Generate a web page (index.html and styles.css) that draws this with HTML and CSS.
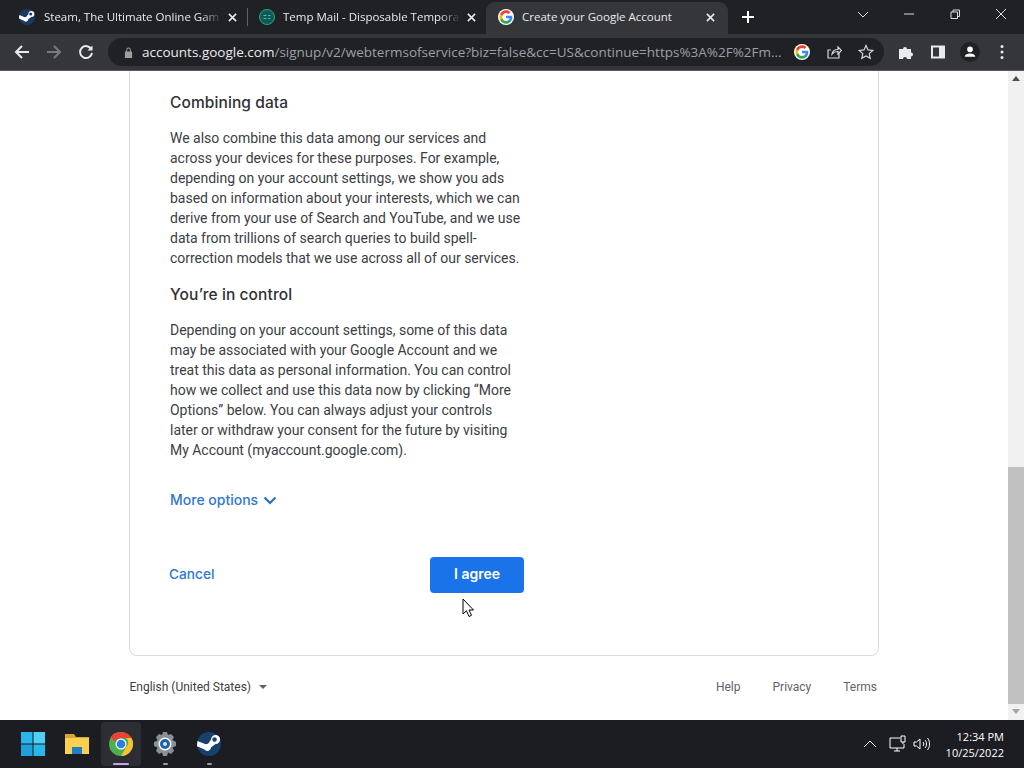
FILE: index.html
```html
<!DOCTYPE html>
<html lang="en">
<head>
<meta charset="utf-8">
<title>Create your Google Account</title>
<link rel="stylesheet" href="styles.css">
</head>
<body>
<div class="app">
  <header class="tabstrip">
    <div class="tab tab-first">
      <svg class="favicon favicon-wide" viewBox="0 0 16 16"><circle cx="8" cy="8" r="8" fill="#1b3a63"/><path d="M0 9.500l5 2.200a2.500 2.500 0 0 0 4.400-1.600l3-2.100a3 3 0 1 0-3-3L7.400 7.800A2.500 2.500 0 0 0 5.800 8.200L.3 6z" fill="#fff"/><circle cx="11.700" cy="5" r="1.500" fill="#1b3a63"/></svg>
      <span class="tab-title tab-fade">Steam, The Ultimate Online Gam</span>
      <svg class="tab-close" viewBox="0 0 10 10"><path d="M1 1l8 8M9 1l-8 8"/></svg>
    </div>
    <div class="tab-sep"></div>
    <div class="tab tab-second">
      <svg class="favicon" viewBox="0 0 16 16"><circle cx="8" cy="8" r="7.500" fill="#0f5a52" stroke="#2aa58f" stroke-width="1"/><path d="M4.500 6.500h3M4.500 9.500h3M9 6.500h2.500M9 9.500h2.500" stroke="#3fc0aa" stroke-width="1.200"/></svg>
      <span class="tab-title tab-fade">Temp Mail - Disposable Tempora</span>
      <svg class="tab-close" viewBox="0 0 10 10"><path d="M1 1l8 8M9 1l-8 8"/></svg>
    </div>
    <div class="tab tab-active">
      <svg class="favicon" viewBox="0 0 48 48"><circle cx="24" cy="24" r="24" fill="#fff"/><path fill="#4285f4" d="M43 24.500c0-1.400-.1-2.700-.4-4H24v7.600h10.800c-.5 2.400-1.900 4.500-4 5.900v5h6.400c3.700-3.500 5.800-8.600 5.800-14.500z"/><path fill="#34a853" d="M24 44c5.400 0 9.900-1.800 13.200-4.900l-6.400-5c-1.800 1.200-4.100 1.900-6.800 1.900-5.200 0-9.600-3.500-11.200-8.200H6.200v5.100C9.500 39.500 16.300 44 24 44z"/><path fill="#fbbc05" d="M12.800 27.800c-.8-2.400-.8-5.100 0-7.600v-5.100H6.200a20 20 0 0 0 0 17.800z"/><path fill="#ea4335" d="M24 12c2.900 0 5.500 1 7.600 3l5.700-5.700C33.900 6 29.400 4 24 4 16.300 4 9.500 8.500 6.200 15.100l6.600 5.100C14.400 15.500 18.800 12 24 12z"/></svg>
      <span class="tab-title">Create your Google Account</span>
      <svg class="tab-close" viewBox="0 0 10 10"><path d="M1 1l8 8M9 1l-8 8"/></svg>
    </div>
    <svg class="new-tab" viewBox="0 0 12 12"><path d="M6 0v12M0 6h12"/></svg>
    <div class="window-controls">
      <svg viewBox="0 0 12 12"><path d="M1 4l5 5 5-5"/></svg>
      <svg viewBox="0 0 12 12"><path d="M1 6h10"/></svg>
      <svg viewBox="0 0 12 12"><path d="M2 4h6.500v6.500H2zM4 4V2h6.500v6.500H8.500"/></svg>
      <svg viewBox="0 0 12 12"><path d="M1 1l10 10M11 1L1 11"/></svg>
    </div>
  </header>
  <nav class="toolbar">
    <svg class="tool-icon" viewBox="0 0 16 16"><path d="M15 8H2M8 2L2 8l6 6"/></svg>
    <svg class="tool-icon tool-disabled" viewBox="0 0 16 16"><path d="M1 8h13M8 2l6 6-6 6"/></svg>
    <svg class="tool-icon" viewBox="0 0 16 16"><path d="M13.500 5.500A6 6 0 1 0 14 9"/><path class="fill" d="M14.500 1.500v5h-5z"/></svg>
    <div class="omnibox">
      <svg class="lock" viewBox="0 0 10 12"><path d="M1 5h8v7H1zM2.500 5V3a2.500 2.500 0 0 1 5 0v2h-1V3a1.500 1.500 0 0 0-3 0v2z"/></svg>
      <span class="url"><span class="url-host">accounts.google.com</span>/signup/v2/webtermsofservice?biz=false&amp;cc=US&amp;continue=https%3A%2F%2Fm...</span>
      <svg class="omni-g" viewBox="0 0 48 48"><circle cx="24" cy="24" r="24" fill="#fff"/><path fill="#4285f4" d="M43 24.500c0-1.400-.1-2.700-.4-4H24v7.600h10.800c-.5 2.400-1.900 4.500-4 5.900v5h6.400c3.700-3.500 5.800-8.600 5.800-14.500z"/><path fill="#34a853" d="M24 44c5.400 0 9.900-1.800 13.200-4.900l-6.400-5c-1.800 1.200-4.100 1.900-6.800 1.900-5.200 0-9.600-3.500-11.200-8.200H6.200v5.100C9.500 39.500 16.300 44 24 44z"/><path fill="#fbbc05" d="M12.800 27.800c-.8-2.400-.8-5.100 0-7.600v-5.100H6.200a20 20 0 0 0 0 17.800z"/><path fill="#ea4335" d="M24 12c2.900 0 5.500 1 7.600 3l5.700-5.700C33.900 6 29.400 4 24 4 16.300 4 9.500 8.500 6.200 15.100l6.600 5.100C14.400 15.500 18.800 12 24 12z"/></svg>
      <svg class="omni-icon" viewBox="0 0 16 16"><path d="M13 9.500V14H2V6h3M6 10c.5-3 3-4.500 6-4.500V3l3.500 3.500L12 10V7.500c-2.500 0-4.500.7-6 2.500z"/></svg>
      <svg class="omni-icon" viewBox="0 0 16 16"><path d="M8 1.500l2 4.400 4.800.5-3.600 3.200 1 4.700L8 12l-4.200 2.300 1-4.700L1.200 6.400 6 5.900z"/></svg>
    </div>
    <div class="toolbar-actions">
      <svg class="solid" viewBox="0 0 16 16"><path d="M1 5h4a2 2 0 1 1 4 0h4v3.500a2 2 0 1 1 0 4V15H9a2 2 0 1 0-4 0H1z"/></svg>
      <svg class="solid" viewBox="0 0 16 16"><path fill-rule="evenodd" d="M1 1.500h14v13H1zM3 3.500v9h6v-9z"/></svg>
      <span class="avatar"><svg viewBox="0 0 16 16"><circle cx="8" cy="5" r="3.200"/><path d="M2 13.500c0-2.500 3-3.800 6-3.800s6 1.300 6 3.800z"/></svg></span>
      <svg class="solid menu" viewBox="0 0 4 16"><circle cx="2" cy="2.500" r="1.500"/><circle cx="2" cy="8" r="1.500"/><circle cx="2" cy="13.500" r="1.500"/></svg>
    </div>
  </nav>
  <div class="viewport">
    <main class="page">
      <section class="card">
        <div class="card-text">
          <h2 class="heading">Combining data</h2>
          <p class="body">We also combine this data among our services and across your devices for these purposes. For example, depending on your account settings, we show you ads based on information about your interests, which we can derive from your use of Search and YouTube, and we use data from trillions of search queries to build spell-correction models that we use across all of our services.</p>
          <h2 class="heading heading-second">You’re in control</h2>
          <p class="body">Depending on your account settings, some of this data may be associated with your Google Account and we treat this data as personal information. You can control how we collect and use this data now by clicking “More Options” below. You can always adjust your controls later or withdraw your consent for the future by visiting My Account (myaccount.google.com).</p>
          <div class="more">More options
            <svg viewBox="0 0 14 9"><path d="M1.500 1.500L7 7l5.500-5.500"/></svg>
          </div>
          <div class="actions">
            <span class="cancel">Cancel</span>
            <span class="agree">I agree</span>
          </div>
        </div>
      </section>
      <footer class="page-footer">
        <div class="lang">English (United States)<span class="caret"></span></div>
        <div class="links"><span>Help</span><span>Privacy</span><span>Terms</span></div>
      </footer>
      <svg class="cursor" viewBox="0 0 12 20"><path d="M1 1v15l3.500-3.200L7 18.500l2.500-1.200L7 12h4.500z"/></svg>
    </main>
    <aside class="scrollbar">
      <span class="arrow-up"></span>
      <div class="scroll-track"><div class="scroll-thumb"></div></div>
      <span class="arrow-down"></span>
    </aside>
  </div>
  <footer class="taskbar">
    <div class="task-icons">
      <div class="task-item">
        <svg class="task-svg" viewBox="0 0 24 24"><path fill="#29b6e8" d="M0 0h11.500v11.500H0z"/><path fill="#4fd0f5" d="M12.500 0H24v11.500H12.500z"/><path fill="#1ea0dc" d="M0 12.500h11.500V24H0z"/><path fill="#29b6e8" d="M12.500 12.500H24V24H12.500z"/></svg>
      </div>
      <div class="task-item">
        <svg class="task-svg" viewBox="0 0 24 24"><path fill="#d8a62c" d="M0 2h9l2 3h13v4H0z"/><path fill="#fbd051" d="M0 6h24v16H0z"/><path fill="#1e7fc4" d="M7 15h10v7H7z"/></svg>
      </div>
      <div class="task-item task-active">
        <svg class="task-svg" viewBox="0 0 48 48"><circle cx="24" cy="24" r="24" fill="#4caf50"/><path fill="#ea4335" d="M24 0a24 24 0 0 1 20.800 12H24a12 12 0 0 0-11.500 8.600L3.500 9.500A24 24 0 0 1 24 0z"/><path fill="#fbc02d" d="M44.800 12A24 24 0 0 1 24 48l10.400-18A12 12 0 0 0 34.400 12z"/><circle cx="24" cy="24" r="11" fill="#fff"/><circle cx="24" cy="24" r="8.500" fill="#2a7de1"/></svg>
        <span class="task-mark task-mark-active"></span>
      </div>
      <div class="task-item">
        <svg class="task-svg" viewBox="0 0 24 24"><path fill="#8a9097" d="M10 0h4l1 3 3-1 3 3-1.500 3L23 10v4l-3.500 1.500L21 19l-3 3-3-1.500-1 3.500h-4l-1-3.500L6 22l-3-3 1.500-3.500L1 14v-4l3.500-1.500L3 5l3-3 3 1z"/><circle cx="12" cy="12" r="6.500" fill="#fff"/><circle cx="12" cy="12" r="5" fill="#1e5fae"/><circle cx="12" cy="12" r="2" fill="#dbe6f3"/></svg>
        <span class="task-mark"></span>
      </div>
      <div class="task-item">
        <svg class="task-svg" viewBox="0 0 16 16"><circle cx="8" cy="8" r="8" fill="#17406f"/><path d="M0 9.500l5 2.200a2.500 2.500 0 0 0 4.400-1.600l3-2.100a3 3 0 1 0-3-3L7.400 7.800A2.500 2.500 0 0 0 5.800 8.200L.3 6z" fill="#fff"/><circle cx="11.700" cy="5" r="1.500" fill="#17406f"/></svg>
        <span class="task-mark"></span>
      </div>
    </div>
    <div class="tray">
      <svg class="tray-icon" viewBox="0 0 14 8"><path d="M1 7l6-6 6 6"/></svg>
      <svg class="tray-net" viewBox="0 0 18 18"><path d="M11 3H1v10h14v-4M5 16h6M8 13v3M12 1h4v6h-4zM14 7v2"/></svg>
      <svg class="tray-sound" viewBox="0 0 18 14"><path d="M1 5v4h2.500L7 12V2L3.500 5zM10 5c1 1 1 3 0 4M12 3c2 2 2 6 0 8M14.500 1c2.700 3 2.700 9 0 12"/></svg>
      <div class="clock"><div>12:34 PM</div><div>10/25/2022</div></div>
    </div>
  </footer>
</div>
</body>
</html>
```

FILE: styles.css
```css
* { box-sizing: border-box; }
html, body { margin: 0; height: 100%; overflow: hidden; }
body { font-family: "Roboto", "Liberation Sans", sans-serif; background: #fff; }
.app { width: 1024px; height: 768px; display: flex; flex-direction: column; }

.tabstrip { height: 34px; flex: none; background: #202124; display: flex; align-items: flex-end; position: relative; font-family: "Open Sans", "Liberation Sans", sans-serif; }
.tab { height: 32px; display: flex; align-items: center; padding-bottom: 2px; color: #e8eaed; font-size: 11.500px; flex: none; }
.tab-first { width: 247px; padding-left: 19px; padding-right: 10.500px; }
.tab-second { width: 238px; padding-left: 11px; padding-right: 10.500px; }
.tab-sep { width: 1px; height: 18px; background: #5f6368; margin-bottom: 8px; flex: none; }
.tab-active { width: 242px; padding-left: 12px; padding-right: 13.500px; background: #35363a; border-radius: 9px 9px 0 0; }
.favicon { width: 16px; height: 16px; flex: none; margin-right: 8px; }
.favicon-wide { margin-right: 9px; }
.tab-title { flex: 1; white-space: nowrap; overflow: hidden; min-width: 0; padding-bottom: 1px; }
.tab-fade { -webkit-mask-image: linear-gradient(90deg, #000 88%, transparent); mask-image: linear-gradient(90deg, #000 88%, transparent); }
.tab-close { width: 9px; height: 9px; flex: none; margin-left: 6px; fill: none; stroke: #e8eaed; stroke-width: 1.800; }
.new-tab { width: 12px; height: 12px; flex: none; margin: 0 0 11px 14px; fill: none; stroke: #fff; stroke-width: 2; }
.window-controls { margin-left: auto; align-self: flex-start; display: flex; gap: 34px; padding: 8px 17px 0 0; }
.window-controls svg { width: 12px; height: 12px; fill: none; stroke: #dadce0; stroke-width: 1; }

.toolbar { height: 37px; flex: none; background: #35363a; display: flex; align-items: center; padding: 0 13px 0 14px; border-bottom: 1px solid #5a5b5e; }
.tool-icon { width: 16px; height: 16px; margin-right: 16px; fill: none; stroke: #e8eaed; stroke-width: 2; flex: none; }
.tool-icon .fill { fill: #e8eaed; stroke: none; }
.tool-disabled { stroke: #777a7e; }
.omnibox { width: 776px; height: 28px; margin-left: -2px; background: #202124; border-radius: 14px; display: flex; align-items: center; padding: 0 10px 0 16px; font-family: "Open Sans", "Liberation Sans", sans-serif; flex: none; }
.lock { width: 9px; height: 11px; fill: #9aa0a6; flex: none; margin-right: 9px; }
.url { flex: 1; font-size: 13.500px; color: #9aa0a6; white-space: nowrap; overflow: hidden; min-width: 0; }
.url-host { color: #e8eaed; }
.omni-g { width: 16px; height: 16px; margin: 0 0 0 12px; flex: none; }
.omni-icon { width: 16px; height: 16px; margin-left: 16px; fill: none; stroke: #d6d8db; stroke-width: 1.200; flex: none; }
.toolbar-actions { display: flex; align-items: center; gap: 16px; margin-left: 14px; }
.solid { width: 16px; height: 16px; fill: #e8eaed; flex: none; }
.menu { width: 4px; margin-left: 6px; }
.avatar { width: 20px; height: 20px; border-radius: 50%; background: #202124; display: flex; align-items: center; justify-content: center; margin: 0 -2px; }
.avatar svg { width: 14px; height: 14px; fill: #fff; }

.viewport { flex: 1; min-height: 0; display: flex; background: #fff; }
.page { flex: 1; position: relative; min-width: 0; padding: 0 0 0 129px; }
.card { width: 750px; height: 585px; border: 1px solid #dadce0; border-top: 0; border-radius: 0 0 8px 8px; padding: 21px 0 0 40px; }
.card-text { width: 354px; }
.heading { margin: 0 0 14px; font: 500 15.500px/22px "Inter", "Open Sans", sans-serif; color: #303134; letter-spacing: .1px; }
.heading-second { margin-top: 16px; }
.body { margin: 0; width: 351px; font-size: 14px; line-height: 20px; color: #3c4043; letter-spacing: -.02px; }
.more { margin-top: 30px; height: 20px; display: flex; align-items: center; gap: 5px; font: 500 14px/20px "Inter", "Open Sans", sans-serif; color: #2f77d0; }
.more svg { width: 14px; height: 9px; fill: none; stroke: #2a6fc4; stroke-width: 2.200; }
.actions { margin-top: 47px; display: flex; justify-content: space-between; align-items: center; }
.cancel { font: 500 13.700px/18px "Inter", "Open Sans", sans-serif; color: #2f77d0; margin-left: -1px; padding-bottom: 2px; }
.agree { width: 94px; height: 36px; background: #1a73e8; color: #fff; border-radius: 4px; display: flex; align-items: center; justify-content: center; font: 600 14px/20px "Inter", "Open Sans", sans-serif; padding-bottom: 2px; }
.page-footer { width: 750px; display: flex; justify-content: space-between; padding: 24px 2px 0 0; font-size: 12px; line-height: 14px; color: #5f6368; }
.lang { color: #3c4043; display: flex; align-items: center; padding-left: .5px; }
.caret { width: 0; height: 0; border: 4px solid transparent; border-top: 4.500px solid #5f6368; border-bottom: 0; margin-left: 8px; }
.links { display: flex; gap: 32px; }
.cursor { position: absolute; left: 462px; top: 527px; width: 12px; height: 20px; fill: #fff; stroke: #000; stroke-width: 1; }

.scrollbar { width: 16px; flex: none; background: #f1f1f1; display: flex; flex-direction: column; align-items: center; }
.scroll-track { flex: 1; width: 100%; display: flex; flex-direction: column; justify-content: flex-end; }
.scroll-thumb { height: 237px; background: #c1c1c1; }
.arrow-up, .arrow-down { height: 16px; flex: none; position: relative; width: 100%; }
.arrow-up::after, .arrow-down::after { content: ""; position: absolute; left: 4px; top: 5px; border: 4px solid transparent; }
.arrow-up::after { border-bottom: 5px solid #505050; border-top: 0; }
.arrow-down::after { border-top: 5px solid #a3a3a3; border-bottom: 0; }

.taskbar { height: 48px; flex: none; background: #1c1d22; display: flex; justify-content: space-between; align-items: center; padding: 0 0 0 13px; color: #fff; }
.task-icons { display: flex; gap: 4px; align-items: center; }
.task-item { width: 40px; height: 44px; display: flex; align-items: center; justify-content: center; position: relative; border-radius: 4px; }
.task-active { background: #2d2e33; }
.task-svg { width: 24px; height: 24px; }
.task-mark { position: absolute; bottom: 1px; left: 18px; width: 5px; height: 2px; border-radius: 1px; background: #9a9ba0; }
.task-mark-active { left: 12px; width: 16px; background: #c9a0e6; }
.tray { display: flex; align-items: center; padding-right: 20px; }
.tray-icon { width: 14px; height: 8px; fill: none; stroke: #fff; stroke-width: 1; margin-right: 12px; }
.tray-net { width: 18px; height: 18px; fill: none; stroke: #fff; stroke-width: 1; margin-right: 6px; }
.tray-sound { width: 18px; height: 14px; fill: none; stroke: #fff; stroke-width: 1; margin-right: 15px; }
.clock { font: 11px/16px "Open Sans", "Liberation Sans", sans-serif; text-align: right; padding-top: 2px; }
```
